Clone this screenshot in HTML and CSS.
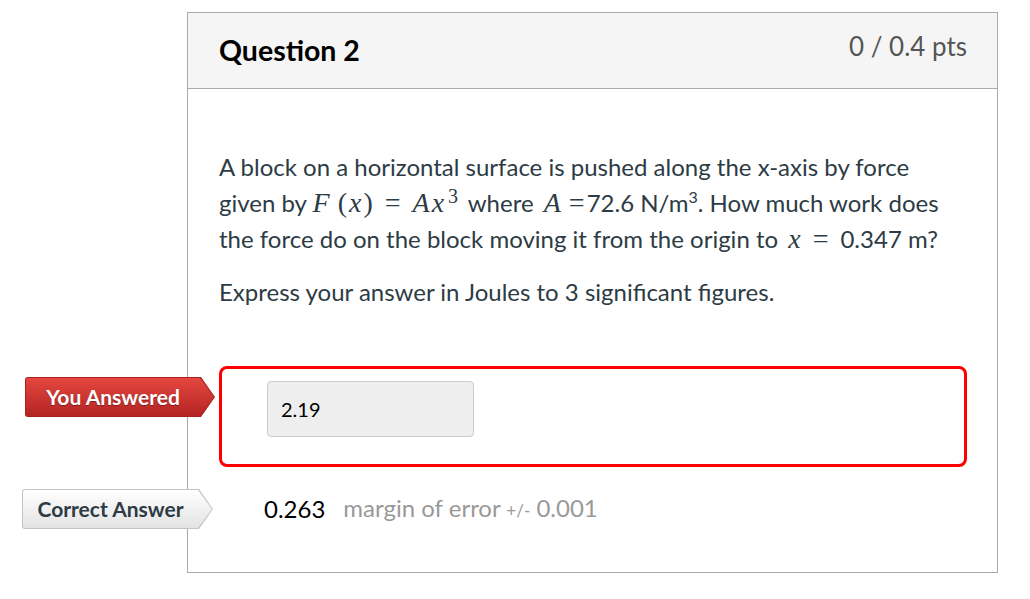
FILE: index.html
```html
<!DOCTYPE html>
<html lang="en">
  <head>
    <meta charset="UTF-8" />
    <title>Question 2</title>
    <link rel="stylesheet" href="styles.css">
  </head>
  <body>
    <div class="question">
      <div class="header">
        <h2 class="title">Question 2</h2>
        <span class="points">0 / 0.4 pts</span>
      </div>
      <div class="content">
        <p>
          A block on a horizontal surface is pushed along the x-axis by force
          given by <span class="eq"><span class="math fn">F</span><span class="math-up">(</span><span class="math arg">x</span><span class="math-up">)</span><span class="math-up op">=</span><span class="math">A</span><span class="math arg">x</span><sup class="math-up">3</sup></span>
          where <span class="eq"><span class="math var">A</span><span class="math-up op-left">=</span>72.6</span> N/m<sup>3</sup>. How much work does
          the force do on the block moving it from the origin to <span class="eq"><span class="math var">x</span><span class="math-up op">=</span>0.347</span> m?
        </p>
        <p>Express your answer in Joules to 3 significant figures.</p>

        <div class="answer wrong">
          <div class="tag tag-red"><span class="tag-inner">You Answered</span></div>
          <div class="input">2.19</div>
        </div>

        <div class="answer correct">
          <div class="tag tag-gray"><span class="tag-inner">Correct Answer</span></div>
          <span class="value">0.263</span>
          <span class="margin">margin of error <small>+/-</small> 0.001</span>
        </div>
      </div>
    </div>
  </body>
</html>
```

FILE: styles.css
```css
body {
  margin: 0;
  background-color: #ffffff;
  font-family: Lato, "Noto Sans", sans-serif;
  color: #2d3b45;
}
.question {
  width: 809px;
  margin: 12px 0 0 187px;
  border: 1px solid #aaaaaa;
}
.header {
  display: flex;
  justify-content: space-between;
  align-items: flex-start;
  height: 75px;
  padding: 0 30px 0 31px;
  background-color: #f5f5f5;
  border-bottom: 1px solid #aaaaaa;
}
.title {
  margin: 20px 0 0 0;
  font-size: 28.5px;
  font-weight: bold;
  color: #000000;
}
.points {
  margin-top: 17px;
  font-size: 26px;
  color: #555555;
}
.content {
  padding: 60px 30px 43px 31px;
  font-size: 24px;
  line-height: 36px;
}
.content p {
  margin: 0 0 17px 0;
}
.content sup {
  font-size: 16px;
  line-height: 0;
}
.eq {
  white-space: nowrap;
}
.math,
.math-up {
  font-family: "Liberation Serif", "DejaVu Serif", serif;
  font-size: 28px;
  line-height: 1;
}
.math {
  font-style: italic;
}
.fn {
  margin-right: 8px;
}
.arg {
  margin: 0 2px;
}
.var {
  margin-left: 4px;
}
.op {
  margin: 0 12px;
}
.op-left {
  margin: 0 2px 0 8px;
}
sup.math-up {
  font-size: 20px;
  margin: 0 4px 0 2px;
}
.answer {
  position: relative;
  box-sizing: border-box;
}
.wrong {
  margin-top: 56px;
  height: 101px;
  padding: 12px 0 0 45px;
  border: 3px solid #ff0000;
  border-radius: 8px;
}
.input {
  box-sizing: border-box;
  width: 207px;
  height: 56px;
  padding: 0 13px;
  display: flex;
  align-items: center;
  background-color: #eeeeee;
  border: 1px solid #cccccc;
  border-radius: 4px;
  font-size: 20px;
  color: #000000;
}
.correct {
  display: flex;
  align-items: center;
  height: 40px;
  margin-top: 22px;
  padding-left: 45px;
  font-size: 24px;
}
.value {
  color: #000000;
  margin-right: 18px;
}
.margin {
  color: #999999;
}
.margin small {
  font-size: 17px;
}
.tag {
  position: absolute;
  height: 40px;
  padding: 1px;
  box-sizing: border-box;
  clip-path: polygon(0 0, calc(100% - 14px) 0, 100% 50%, calc(100% - 14px) 100%, 0 100%);
  border-radius: 3px;
}
.tag-inner {
  display: flex;
  align-items: center;
  justify-content: center;
  height: 100%;
  padding-right: 14px;
  font-size: 21px;
  font-weight: bold;
  clip-path: polygon(0 0, calc(100% - 14px) 0, 100% 50%, calc(100% - 14px) 100%, 0 100%);
  border-radius: 2px;
}
.tag-red {
  top: 8px;
  left: -197px;
  width: 190px;
  background-color: #a82020;
}
.tag-red .tag-inner {
  color: #ffffff;
  background: linear-gradient(#e4473f, #b42423);
  text-shadow: 0 1px 1px rgba(0, 0, 0, 0.35);
}
.tag-gray {
  top: 0;
  left: -197px;
  width: 191px;
  background-color: #c4c4c4;
}
.tag-gray .tag-inner {
  color: #2d3b45;
  background: linear-gradient(#ffffff, #e3e3e3);
}
```
